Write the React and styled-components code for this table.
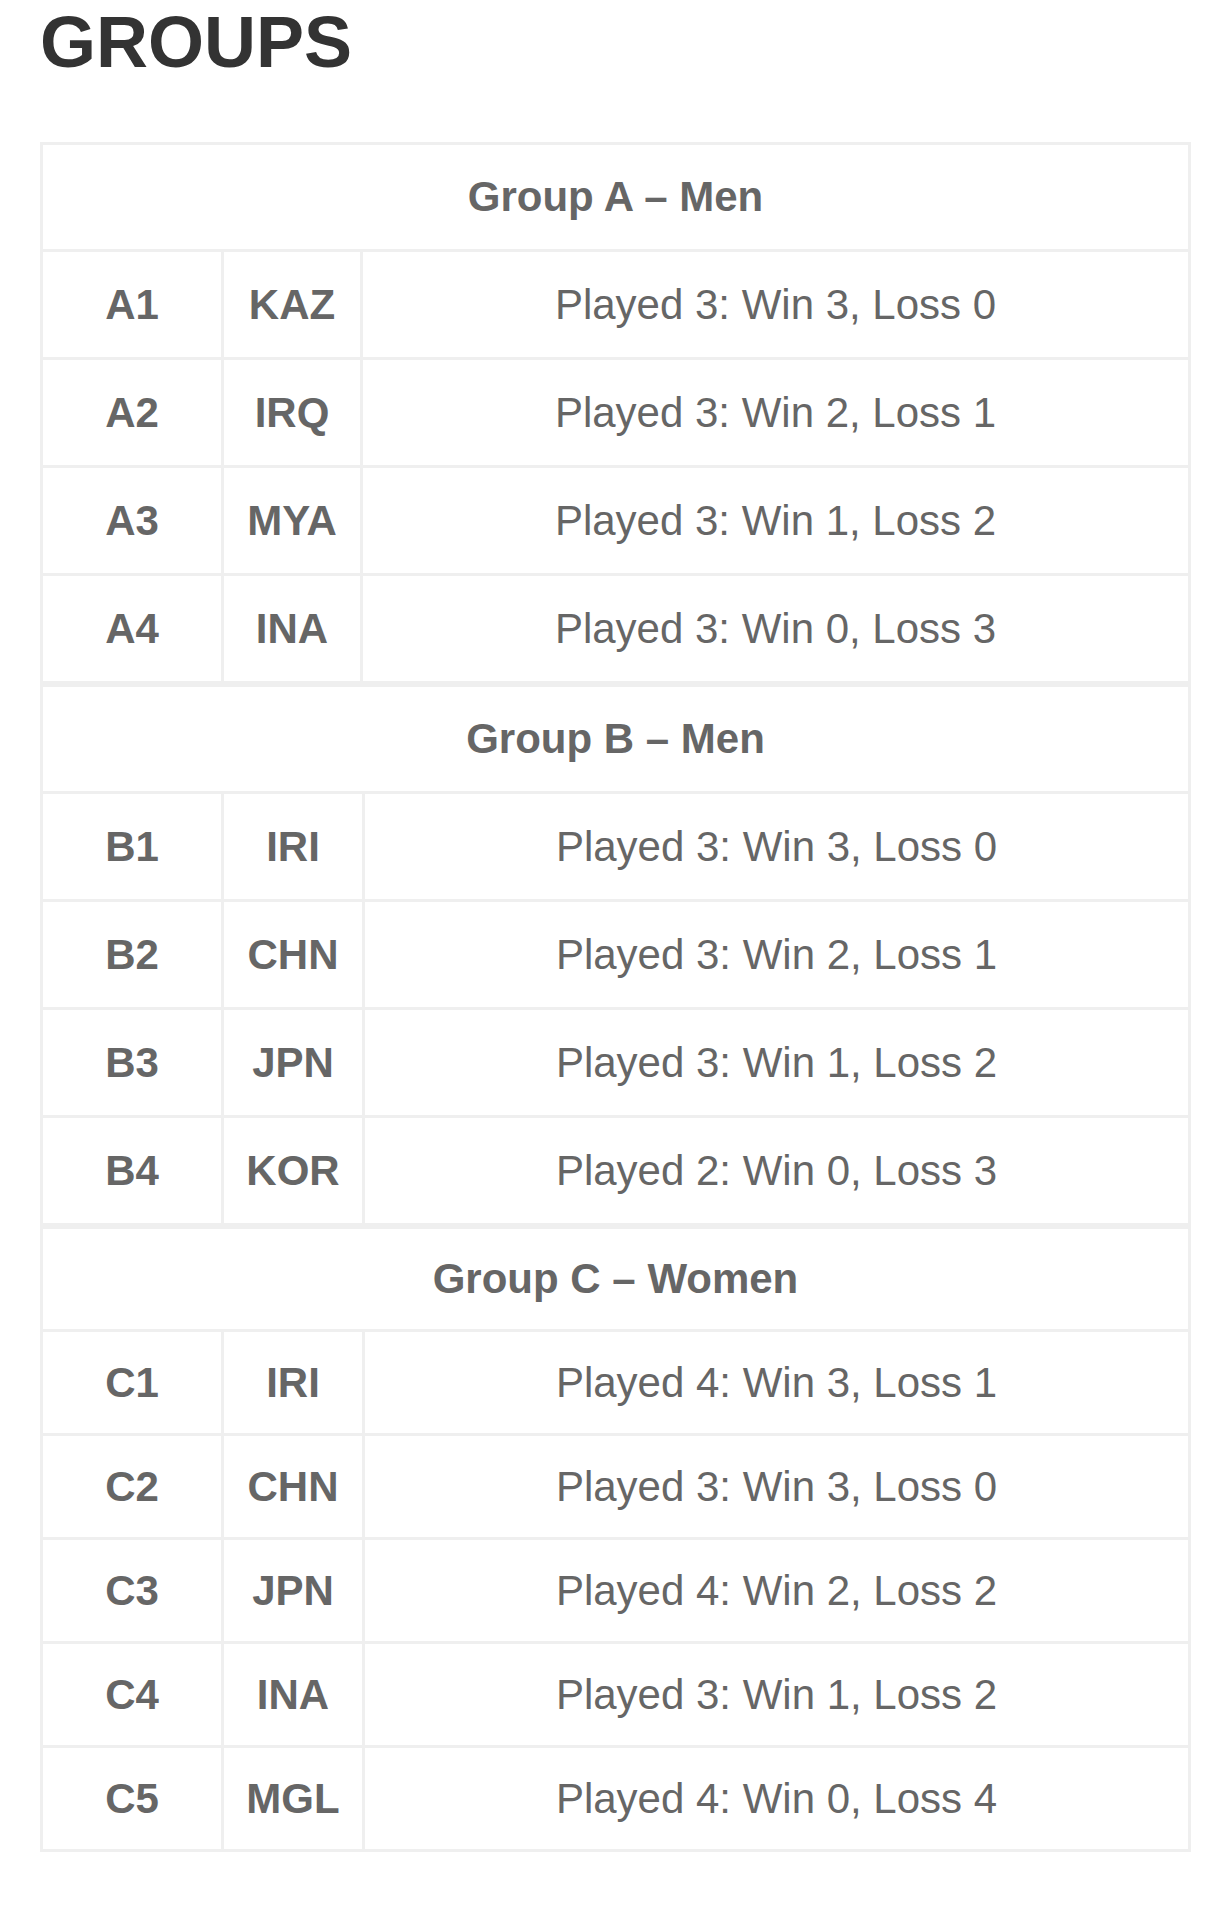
import React from "react";
import styled, { createGlobalStyle } from "styled-components";

const GlobalStyle = createGlobalStyle`
  html, body {
    margin: 0;
    padding: 0;
    background: #ffffff;
  }
  body {
    font-family: "Liberation Sans", Arial, Helvetica, sans-serif;
  }
`;

const Page = styled.div`
  padding: 1px 36px 40px 40px;
  box-sizing: border-box;
  width: 1227px;
`;

const Title = styled.h1`
  margin: 0 0 59px;
  font-family: "Liberation Sans", Arial, sans-serif;
  font-size: 72px;
  font-weight: 700;
  line-height: normal;
  color: #333333;
`;

const Tables = styled.div`
  display: flex;
  flex-direction: column;
`;

const GroupTable = styled.table`
  width: 1151px;
  border-collapse: collapse;
  table-layout: fixed;
  border: 3px solid #efefef;
`;

const Col = styled.col`
  width: ${(p) => (p.$w ? `${p.$w}px` : "auto")};
`;

const Row = styled.tr`
  height: ${(p) => p.$h}px;
`;

const HeaderCell = styled.th`
  border: 3px solid #efefef;
  padding: 0;
  text-align: center;
  vertical-align: middle;
  font-size: 42px;
  font-weight: 700;
  color: #666666;
  line-height: 48px;
`;

const CodeCell = styled.td`
  border: 3px solid #efefef;
  padding: 0;
  text-align: center;
  vertical-align: middle;
  font-size: 42px;
  font-weight: 700;
  color: #666666;
  line-height: 48px;
`;

const RecordCell = styled.td`
  border: 3px solid #efefef;
  padding: 0;
  text-align: center;
  vertical-align: middle;
  font-size: 42px;
  font-weight: 400;
  color: #666666;
  line-height: 48px;
`;

const groups = [
  {
    title: "Group A – Men",
    col2: 139,
    headerH: 107,
    rowH: 108,
    rows: [
      ["A1", "KAZ", "Played 3: Win 3, Loss 0"],
      ["A2", "IRQ", "Played 3: Win 2, Loss 1"],
      ["A3", "MYA", "Played 3: Win 1, Loss 2"],
      ["A4", "INA", "Played 3: Win 0, Loss 3"],
    ],
  },
  {
    title: "Group B – Men",
    col2: 141,
    headerH: 107,
    rowH: 108,
    rows: [
      ["B1", "IRI", "Played 3: Win 3, Loss 0"],
      ["B2", "CHN", "Played 3: Win 2, Loss 1"],
      ["B3", "JPN", "Played 3: Win 1, Loss 2"],
      ["B4", "KOR", "Played 2: Win 0, Loss 3"],
    ],
  },
  {
    title: "Group C – Women",
    col2: 141,
    headerH: 103,
    rowH: 104,
    rows: [
      ["C1", "IRI", "Played 4: Win 3, Loss 1"],
      ["C2", "CHN", "Played 3: Win 3, Loss 0"],
      ["C3", "JPN", "Played 4: Win 2, Loss 2"],
      ["C4", "INA", "Played 3: Win 1, Loss 2"],
      ["C5", "MGL", "Played 4: Win 0, Loss 4"],
    ],
  },
];

export default function App() {
  return (
    <>
      <GlobalStyle />
      <Page>
        <Title>GROUPS</Title>
        <Tables>
          {groups.map((g) => (
            <GroupTable key={g.title}>
              <colgroup>
                <Col $w={181} />
                <Col $w={g.col2} />
                <Col />
              </colgroup>
              <tbody>
                <Row $h={g.headerH}>
                  <HeaderCell colSpan={3}>{g.title}</HeaderCell>
                </Row>
                {g.rows.map(([code, team, record]) => (
                  <Row key={code} $h={g.rowH}>
                    <CodeCell>{code}</CodeCell>
                    <CodeCell>{team}</CodeCell>
                    <RecordCell>{record}</RecordCell>
                  </Row>
                ))}
              </tbody>
            </GroupTable>
          ))}
        </Tables>
      </Page>
    </>
  );
}
